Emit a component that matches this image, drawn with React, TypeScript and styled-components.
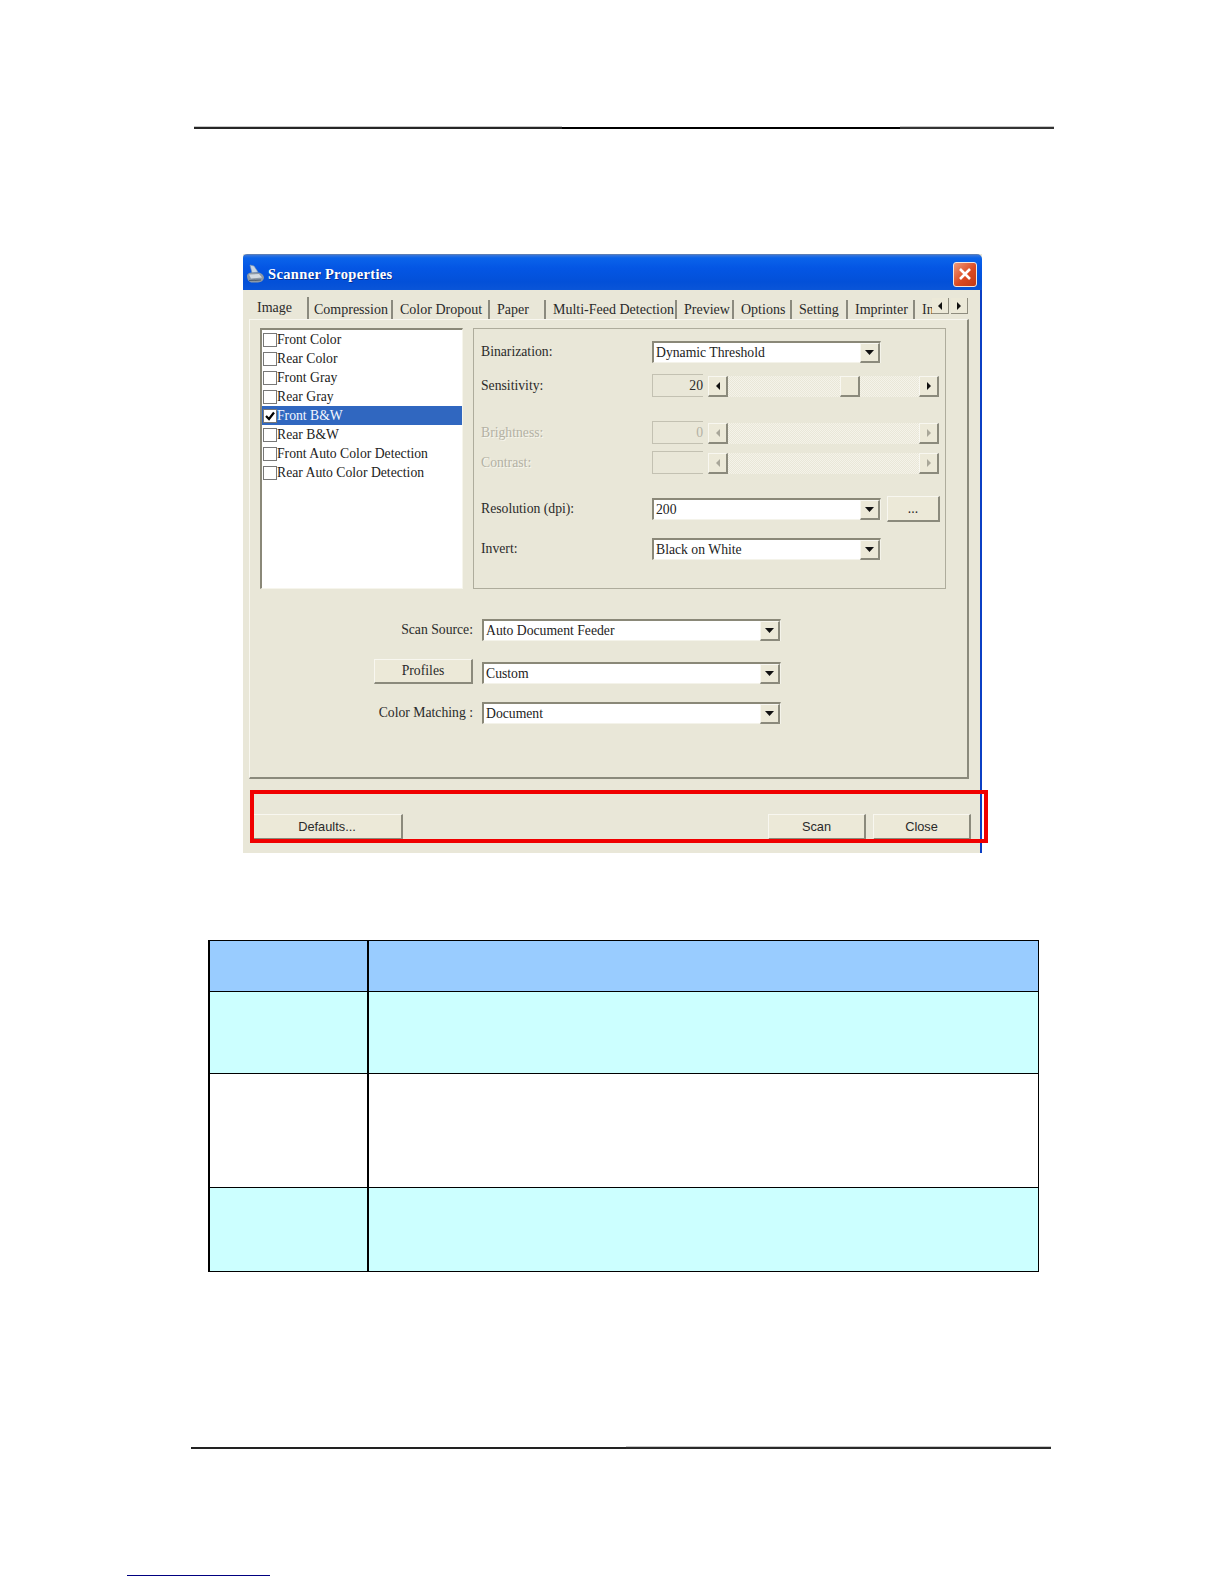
import React from "react";
import styled, { createGlobalStyle } from "styled-components";

const Global = createGlobalStyle`
  html, body { margin: 0; padding: 0; background: #fff; }
  * { box-sizing: border-box; }
`;

const Page = styled.div`
  width: 1224px;
  height: 1584px;
  overflow: hidden;
  background: #fff;
  padding-top: 127px;
  display: flex;
  flex-direction: column;
  align-items: flex-start;
  position: relative;
  font-family: "Liberation Serif", serif;
`;

const Rule = styled.div<{ $left: number; $top: number }>`
  margin-left: ${(p) => p.$left}px;
  margin-top: ${(p) => p.$top}px;
  width: 860px;
  height: 2px;
  flex: none;
  display: flex;
`;

const RuleSeg = styled.div<{ $w: number; $color: string; $halo?: boolean }>`
  width: ${(p) => p.$w}px;
  height: 2px;
  flex: none;
  background: ${(p) => p.$color};
  box-shadow: ${(p) => (p.$halo ? "0 -1px 0 #c8c8c8" : "none")};
`;

const Window = styled.div`
  margin-left: 243px;
  margin-top: 125px;
  width: 739px;
  height: 599px;
  flex: none;
  display: flex;
  flex-direction: column;
  position: relative;
  background: #e9e7d8;
`;

const TitleBar = styled.div`
  height: 36px;
  flex: none;
  display: flex;
  align-items: center;
  padding: 4px 5px 0 3px;
  gap: 3px;
  border-radius: 4px 5px 0 0;
  background: linear-gradient(180deg, #7a8696 0, #3b76d8 1px, #0a63ea 4px, #0456e4 14px, #0350d8 28px, #0a55d8 36px);
`;

const TitleText = styled.span`
  flex: 1;
  color: #fff;
  font-weight: 700;
  font-size: 14.5px;
  letter-spacing: 0.35px;
  text-shadow: 1px 1px 0 #0a2f90;
`;

const CloseBtn = styled.div`
  width: 24px;
  height: 25px;
  border: 1px solid #f3e7e0;
  border-radius: 3px;
  background: linear-gradient(135deg, #ef9a7c, #dc4a22 55%, #c23a18);
  display: flex;
  align-items: center;
  justify-content: center;
`;

const Body = styled.div`
  flex: 1;
  display: flex;
  flex-direction: column;
  border-right: 2px solid #0b3fc4;
  padding-left: 6px;
`;

const TabStrip = styled.div`
  height: 29px;
  flex: none;
  display: flex;
  align-items: flex-end;
`;

const Tabs = styled.div`
  width: 683px;
  height: 22px;
  overflow: hidden;
  display: flex;
  align-items: flex-end;
  flex: none;
`;

const Tab = styled.div<{ $w: number; $active?: boolean; $last?: boolean; $pad?: number }>`
  flex: none;
  width: ${(p) => p.$w}px;
  height: ${(p) => (p.$active ? 22 : 19)}px;
  padding: ${(p) => (p.$active ? "2px 0 0 8px" : `1px 0 0 ${p.$pad ?? 7}px`)};
  border-right: ${(p) => (p.$last ? "none" : "2px solid #8b8a7e")};
  font-size: 14px;
  line-height: 18px;
  white-space: nowrap;
  color: #2a2a2a;
`;

const TabArrows = styled.div`
  display: flex;
  gap: 2px;
  margin-bottom: 5px;
`;

const MiniBtn = styled.div`
  width: 17px;
  height: 16px;
  background: #ece9d8;
  border-right: 1px solid #8f8d7f;
  border-bottom: 1px solid #8f8d7f;
  display: flex;
  align-items: center;
  justify-content: center;
`;

const Panel = styled.div`
  width: 720px;
  height: 460px;
  flex: none;
  border-left: 1px solid #f8f7f0;
  border-top: 1px solid #f8f7f0;
  border-right: 2px solid #8b8a7c;
  border-bottom: 2px solid #8b8a7c;
  padding: 8px 0 0 10px;
`;

const TopRow = styled.div`
  display: flex;
  gap: 10px;
`;

const List = styled.div`
  width: 203px;
  height: 261px;
  flex: none;
  background: #fff;
  border-top: 2px solid #8a8878;
  border-left: 2px solid #8a8878;
  border-right: 1px solid #f6f5ec;
  border-bottom: 1px solid #f6f5ec;
`;

const ListRow = styled.div<{ $sel?: boolean }>`
  height: 19px;
  display: flex;
  align-items: center;
  padding-left: 1px;
  font-size: 13.7px;
  background: ${(p) => (p.$sel ? "#3067c0" : "transparent")};
  color: ${(p) => (p.$sel ? "#f4f8ff" : "#222")};
  white-space: nowrap;
`;

const Check = styled.div`
  width: 14px;
  height: 14px;
  flex: none;
  background: #fff;
  border: 1px solid #777;
  display: flex;
  align-items: center;
  justify-content: center;
`;

const Group = styled.div`
  width: 473px;
  height: 261px;
  flex: none;
  border: 1px solid #aeac9c;
  padding: 12px 0 0 7px;
`;

const FieldRow = styled.div<{ $top?: number }>`
  display: flex;
  align-items: center;
  margin-top: ${(p) => p.$top ?? 0}px;
`;

const FieldLabel = styled.div<{ $off?: boolean }>`
  width: 171px;
  flex: none;
  font-size: 13.7px;
  color: ${(p) => (p.$off ? "#b3b1a4" : "#2a2a2a")};
  text-shadow: ${(p) => (p.$off ? "1px 1px 0 #f7f6ee" : "none")};
`;

const Combo = styled.div<{ $w: number; $nudge?: number }>`
  width: ${(p) => p.$w}px;
  height: 22px;
  flex: none;
  margin-top: ${(p) => p.$nudge ?? 0}px;
  background: #fff;
  border-top: 2px solid #8a8878;
  border-left: 2px solid #8a8878;
  border-right: 1px solid #f4f3ea;
  border-bottom: 1px solid #f4f3ea;
  display: flex;
  align-items: center;
  justify-content: space-between;
  padding-left: 2px;
  font-size: 13.7px;
  color: #222;
  white-space: nowrap;
`;

const ComboBtn = styled.div`
  width: 20px;
  height: 20px;
  flex: none;
  background: #ece9d8;
  border-top: 1px solid #f8f7f0;
  border-left: 1px solid #f8f7f0;
  border-right: 2px solid #8b8a7c;
  border-bottom: 2px solid #8b8a7c;
  display: flex;
  align-items: center;
  justify-content: center;
`;

const NumBox = styled.div<{ $off?: boolean }>`
  width: 51px;
  height: 23px;
  flex: none;
  border: 1px solid #c3c1b2;
  border-right: none;
  text-align: right;
  font-size: 13.7px;
  line-height: 21px;
  color: ${(p) => (p.$off ? "#b3b1a4" : "#2a2a2a")};
`;

const Scroll = styled.div`
  margin: 2px 0 0 5px;
  width: 231px;
  height: 21px;
  flex: none;
  display: flex;
  background: repeating-conic-gradient(#f5f3ea 0 25%, #e9e7d8 0 50%) 0 0 / 2px 2px;
`;

const ScrollBtn = styled.div<{ $at?: number }>`
  width: 20px;
  height: 21px;
  flex: none;
  background: #ece9d8;
  border-right: 2px solid #8b8a7c;
  border-bottom: 2px solid #8b8a7c;
  border-top: 1px solid #f8f7f0;
  border-left: 1px solid #f8f7f0;
  margin-left: ${(p) => p.$at ?? 0}px;
  display: flex;
  align-items: center;
  justify-content: center;
`;

const Button = styled.div<{ $w: number; $h: number; $sans?: boolean; $ml?: number; $mr?: number; $end?: boolean }>`
  width: ${(p) => p.$w}px;
  height: ${(p) => p.$h}px;
  flex: none;
  margin-left: ${(p) => p.$ml ?? 0}px;
  margin-right: ${(p) => p.$mr ?? 0}px;
  justify-self: ${(p) => (p.$end ? "end" : "auto")};
  background: #ece9d8;
  border-top: 1px solid #f8f7f0;
  border-left: 1px solid #f8f7f0;
  border-right: 2px solid #8b8a7c;
  border-bottom: 2px solid #8b8a7c;
  display: flex;
  align-items: center;
  justify-content: center;
  color: #2a2a2a;
  font-family: ${(p) => (p.$sans ? '"Liberation Sans", sans-serif' : "inherit")};
  font-size: ${(p) => (p.$sans ? 12.8 : 13.7)}px;
`;

const LowerRow = styled.div<{ $top: number }>`
  display: grid;
  grid-template-columns: 213px 299px;
  column-gap: 9px;
  align-items: center;
  margin-top: ${(p) => p.$top}px;
`;

const LowerLabel = styled.div`
  justify-self: end;
  font-size: 13.7px;
  color: #2a2a2a;
  white-space: nowrap;
`;

const Footer = styled.div`
  flex: 1;
  display: flex;
  align-items: flex-start;
  padding: 35px 0 0 3px;
  gap: 7px;
`;

const Spacer = styled.div`
  flex: 1;
`;

const RedBox = styled.div`
  position: absolute;
  left: 7px;
  top: 536px;
  width: 738px;
  height: 53px;
  border: 4px solid #f00000;
  pointer-events: none;
`;

const InfoTable = styled.div`
  margin-left: 208px;
  margin-top: 87px;
  width: 831px;
  flex: none;
  border: 1px solid #000;
  border-left-width: 2px;
`;

const TRow = styled.div<{ $h: number; $bg: string; $first?: boolean }>`
  display: grid;
  grid-template-columns: 157px 1fr;
  height: ${(p) => p.$h}px;
  background: ${(p) => p.$bg};
  border-top: ${(p) => (p.$first ? "none" : "1px solid #000")};
`;

const TCell = styled.div`
  & + & {
    border-left: 2px solid #000;
  }
`;

const LinkLine = styled.div`
  margin-left: 127px;
  margin-top: 126px;
  width: 143px;
  height: 1px;
  background: #000080;
  flex: none;
`;

const Tri = ({ dir, off }: { dir: "l" | "r" | "d"; off?: boolean }) => {
  const pts = dir === "l" ? "6,1 2,5 6,9" : dir === "r" ? "2,1 6,5 2,9" : "1,3 10,3 5.5,8";
  return (
    <svg width={dir === "d" ? 11 : 8} height="10" viewBox={dir === "d" ? "0 0 11 10" : "0 0 8 10"}>
      <polygon points={pts} fill={off ? "#a9a799" : "#111"} />
    </svg>
  );
};

const ScannerIcon = () => (
  <svg width="19" height="20" viewBox="0 0 19 20">
    <path d="M4 1 L8 2 L12 8 L6 9 Z" fill="#c9d6e4" stroke="#7f93ad" strokeWidth="0.6" />
    <path d="M1 12 Q1 9 5 8.5 L13 8.5 Q18 10 18 14 Q17 18 12 18.5 L5 18.5 Q1 17 1 12 Z" fill="#8d99a6" />
    <path d="M3 10.5 L13 10 L16 13.5 L5 14.5 Z" fill="#d4dbe2" />
    <path d="M3 16.5 L15 16" stroke="#4f5c6c" strokeWidth="1.2" />
  </svg>
);

const ScrollBar = ({ off, thumb }: { off?: boolean; thumb?: boolean }) => (
  <Scroll>
    <ScrollBtn>
      <Tri dir="l" off={off} />
    </ScrollBtn>
    {thumb ? (
      <>
        <ScrollBtn $at={112} />
        <ScrollBtn $at={59}>
          <Tri dir="r" off={off} />
        </ScrollBtn>
      </>
    ) : (
      <ScrollBtn $at={191}>
        <Tri dir="r" off={off} />
      </ScrollBtn>
    )}
  </Scroll>
);

const DropCombo = ({ w, text, nudge }: { w: number; text: string; nudge?: number }) => (
  <Combo $w={w} $nudge={nudge}>
    <span>{text}</span>
    <ComboBtn>
      <Tri dir="d" />
    </ComboBtn>
  </Combo>
);

const tabs = [
  { t: "Compression", w: 84, pad: 5 },
  { t: "Color Dropout", w: 97 },
  { t: "Paper", w: 56 },
  { t: "Multi-Feed Detection", w: 131 },
  { t: "Preview", w: 57 },
  { t: "Options", w: 58 },
  { t: "Setting", w: 56 },
  { t: "Imprinter", w: 67 },
];

const modes = [
  "Front Color",
  "Rear Color",
  "Front Gray",
  "Rear Gray",
  "Front B&W",
  "Rear B&W",
  "Front Auto Color Detection",
  "Rear Auto Color Detection",
];

export default function App() {
  return (
    <Page>
      <Global />
      <Rule $left={194} $top={0}>
        <RuleSeg $w={368} $color="#262626" $halo />
        <RuleSeg $w={338} $color="#000" />
        <RuleSeg $w={154} $color="#333" $halo />
      </Rule>
      <Window>
        <TitleBar>
          <ScannerIcon />
          <TitleText>Scanner Properties</TitleText>
          <CloseBtn>
            <svg width="16" height="16" viewBox="0 0 16 16">
              <path d="M3 3 L13 13 M13 3 L3 13" stroke="#fff" strokeWidth="2.6" />
            </svg>
          </CloseBtn>
        </TitleBar>
        <Body>
          <TabStrip>
            <Tabs>
              <Tab $w={60} $active>
                Image
              </Tab>
              {tabs.map((x) => (
                <Tab key={x.t} $w={x.w} $pad={x.pad}>
                  {x.t}
                </Tab>
              ))}
              <Tab $w={40} $last>
                Information
              </Tab>
            </Tabs>
            <TabArrows>
              <MiniBtn>
                <Tri dir="l" />
              </MiniBtn>
              <MiniBtn>
                <Tri dir="r" />
              </MiniBtn>
            </TabArrows>
          </TabStrip>
          <Panel>
            <TopRow>
              <List>
                {modes.map((m, i) => (
                  <ListRow key={m} $sel={i === 4}>
                    <Check>
                      {i === 4 && (
                        <svg width="12" height="12" viewBox="0 0 12 12">
                          <path d="M2 6 L5 9 L10 2.5" fill="none" stroke="#000" strokeWidth="2.2" />
                        </svg>
                      )}
                    </Check>
                    {m}
                  </ListRow>
                ))}
              </List>
              <Group>
                <FieldRow>
                  <FieldLabel>Binarization:</FieldLabel>
                  <DropCombo w={229} text="Dynamic Threshold" />
                </FieldRow>
                <FieldRow $top={11}>
                  <FieldLabel>Sensitivity:</FieldLabel>
                  <NumBox>20</NumBox>
                  <ScrollBar thumb />
                </FieldRow>
                <FieldRow $top={24}>
                  <FieldLabel $off>Brightness:</FieldLabel>
                  <NumBox $off>0</NumBox>
                  <ScrollBar off />
                </FieldRow>
                <FieldRow $top={7}>
                  <FieldLabel $off>Contrast:</FieldLabel>
                  <NumBox $off />
                  <ScrollBar off />
                </FieldRow>
                <FieldRow $top={22}>
                  <FieldLabel>Resolution (dpi):</FieldLabel>
                  <DropCombo w={229} text="200" />
                  <Button $w={53} $h={26} $ml={6}>
                    ...
                  </Button>
                </FieldRow>
                <FieldRow $top={16}>
                  <FieldLabel>Invert:</FieldLabel>
                  <DropCombo w={229} text="Black on White" />
                </FieldRow>
              </Group>
            </TopRow>
            <LowerRow $top={30}>
              <LowerLabel>Scan Source:</LowerLabel>
              <DropCombo w={299} text="Auto Document Feeder" />
            </LowerRow>
            <LowerRow $top={18}>
              <Button $w={99} $h={25} $end>
                Profiles
              </Button>
              <DropCombo w={299} text="Custom" nudge={3} />
            </LowerRow>
            <LowerRow $top={18}>
              <LowerLabel>Color Matching :</LowerLabel>
              <DropCombo w={299} text="Document" />
            </LowerRow>
          </Panel>
          <Footer>
            <Button $w={151} $h={26} $sans>
              Defaults...
            </Button>
            <Spacer />
            <Button $w={98} $h={26} $sans>
              Scan
            </Button>
            <Button $w={98} $h={26} $sans $mr={9}>
              Close
            </Button>
          </Footer>
        </Body>
        <RedBox />
      </Window>
      <InfoTable>
        <TRow $h={50} $bg="#99ccff" $first>
          <TCell />
          <TCell />
        </TRow>
        <TRow $h={82} $bg="#ccffff">
          <TCell />
          <TCell />
        </TRow>
        <TRow $h={114} $bg="#ffffff">
          <TCell />
          <TCell />
        </TRow>
        <TRow $h={84} $bg="#ccffff">
          <TCell />
          <TCell />
        </TRow>
      </InfoTable>
      <Rule $left={191} $top={175}>
        <RuleSeg $w={435} $color="#222" />
        <RuleSeg $w={425} $color="#2a2a2a" $halo />
      </Rule>
      <LinkLine />
    </Page>
  );
}
